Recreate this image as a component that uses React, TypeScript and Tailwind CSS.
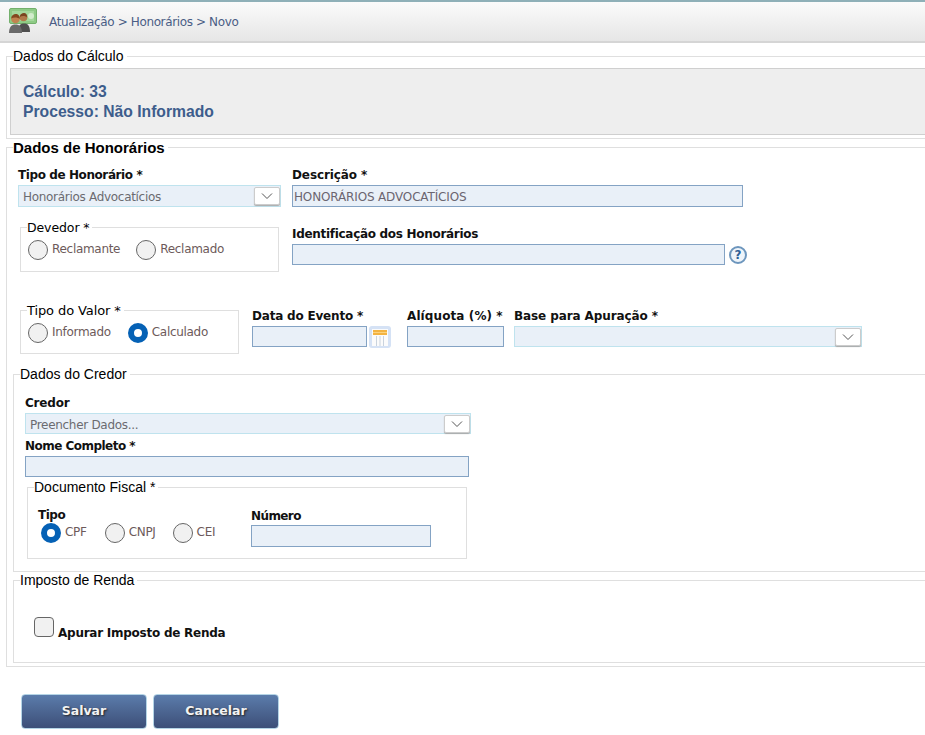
import type { ReactNode } from "react";

const labelCls = "block h-[17px] text-[12px] leading-[15px] font-bold text-[#111] whitespace-nowrap";
const arialLegend = "[font-family:'Liberation_Sans',sans-serif] text-[14px]";

function Chevron() {
  return (
    <svg width="14" height="8" viewBox="0 0 14 8" fill="none" stroke="#555" strokeWidth="1">
      <path d="M2 1.5 L7 6.5 L12 1.5" />
    </svg>
  );
}

function Select({ value, className }: { value?: string; className: string }) {
  return (
    <div className={`flex items-center justify-between border border-[#bfe3ee] bg-[#e9f0f8] pl-[4px] ${className}`}>
      <span className="pt-[2px] text-[12px] tracking-[-0.3px] text-[#6b6b70] whitespace-nowrap">{value}</span>
      <span className="flex h-[18px] w-[26px] items-center justify-center rounded-[2px] border border-[#ccc] bg-white shadow-[0_1px_1px_#aaa]">
        <Chevron />
      </span>
    </div>
  );
}

function Input({ value, className }: { value?: string; className: string }) {
  return (
    <div className={`flex items-center border border-[#84a3c4] bg-[#e9f0f8] pt-[1px] pl-[1px] text-[12px] tracking-[-0.15px] text-[#6b6570] whitespace-nowrap ${className}`}>
      {value}
    </div>
  );
}

function Radio({ label, checked, className }: { label: string; checked?: boolean; className?: string }) {
  return (
    <div className={`flex items-start ${className ?? ""}`}>
      {checked ? (
        <span className="h-[20px] w-[20px] rounded-full border-[6px] border-[#0561b5] bg-white" />
      ) : (
        <span className="h-[20px] w-[20px] rounded-full border-[1.5px] border-[#666] bg-[#f1f1f1]" />
      )}
      <span className="ml-[4px] pt-[1px] text-[12px] leading-[16px] tracking-[-0.3px] text-[#6d5a5a] whitespace-nowrap">{label}</span>
    </div>
  );
}

function Group({
  title,
  className,
  legendCls,
  children,
}: {
  title: string;
  className: string;
  legendCls: string;
  children: ReactNode;
}) {
  return (
    <fieldset className={`border border-[#dfdfdf] ${className}`}>
      <legend className={`ml-[6px] h-[15px] pr-[3px] leading-[15px] text-black whitespace-nowrap ${legendCls}`}>
        {title}
      </legend>
      {children}
    </fieldset>
  );
}

function MoneyPeopleIcon() {
  return (
    <svg width="28" height="25" viewBox="0 0 28 25">
      <rect x="0.5" y="0.5" width="27" height="15" rx="1.5" fill="#8ecb86" stroke="#74b06c" />
      <rect x="3" y="3" width="22" height="10" fill="#a5d89d" />
      <circle cx="22" cy="8" r="3" fill="#d2eccc" />
      <path d="M9 24 C9 18 11 15.5 15 15.5 C19 15.5 21 18 21 24 Z" fill="#4f4f4f" />
      <circle cx="14.5" cy="9.5" r="3.8" fill="#b07a4a" />
      <path d="M10.8 9 C11 6 13 5 15 5 C17 5 18.5 7 18.2 9.5 C17 8 13 7.5 10.8 9 Z" fill="#7a4420" />
      <path d="M0 25 C0 19 2.5 16.5 6.5 16.5 C10.5 16.5 13 19 13 25 Z" fill="#6a6a6a" />
      <circle cx="6.5" cy="11" r="4.3" fill="#c08450" />
      <path d="M2.2 10.5 C2.2 7.5 4.5 6 6.8 6 C9 6 11 7.8 10.8 11 C9 9.2 4.5 9 2.2 10.5 Z" fill="#84481f" />
    </svg>
  );
}

function CalendarIcon() {
  return (
    <div className="ml-[2px] flex h-[22px] w-[22px] items-center justify-center rounded-[3px] bg-[#d5e2f5]">
      <svg width="16" height="17" viewBox="0 0 16 17">
        <rect x="0" y="0" width="16" height="17" fill="#fbfbfb" />
        <rect x="1" y="1" width="14" height="5" fill="#f3b341" />
        <rect x="1" y="3" width="14" height="1" fill="#fbd27f" />
        <path d="M4.5 7v10M8 7v10M11.5 7v10" stroke="#c9d3de" />
      </svg>
    </div>
  );
}

function ActionButton({ label }: { label: string }) {
  return (
    <button className="h-[35px] w-[126px] rounded-[4px] border border-[#b5d5e6] bg-gradient-to-b from-[#5b7cab] to-[#3d4f78] text-[12.5px] font-bold text-[#f2f2f2] [text-shadow:1px_1px_2px_#222]">
      {label}
    </button>
  );
}

export default function App() {
  return (
    <div className="h-[735px] w-[925px] overflow-hidden bg-white" style={{ fontFamily: "'DejaVu Sans', sans-serif" }}>
      {/* Header */}
      <div className="flex h-[43px] items-center border-t-2 border-b-2 border-t-[#8fb0b8] border-b-[#d5d5d5] bg-gradient-to-b from-[#fbfbfb] to-[#e6e6e6]">
        <div className="ml-[9px] mb-[2px]">
          <MoneyPeopleIcon />
        </div>
        <span className="ml-[12px] text-[12px] tracking-[-0.37px] text-[#4a5d85]">Atualização &gt; Honorários &gt; Novo</span>
      </div>

      {/* Dados do Cálculo */}
      <div style={{ fontFamily: "'Liberation Sans', sans-serif" }}>
        <Group title="Dados do Cálculo" className="mt-[6px] ml-[6px] w-[960px] pb-[3px]" legendCls={arialLegend}>
          <div className="mt-[4px] ml-[3px] flex h-[67px] flex-col justify-center border border-[#cfcfcf] bg-[#eeeeee] pl-[12px] text-[15.7px] leading-[20px] font-bold text-[#3d5d8c]">
            <div>Cálculo: 33</div>
            <div>Processo: Não Informado</div>
          </div>
        </Group>
      </div>

      {/* Dados de Honorários */}
      <Group
        title="Dados de Honorários"
        className="mt-[1px] ml-[6px] w-[960px] pb-[3px]"
        legendCls="font-bold [font-family:'Liberation_Sans',sans-serif] text-[15px]"
      >
        <div className="mt-[13px] ml-[11px] flex">
          <div className="w-[263px]">
            <label className={`${labelCls} tracking-[-0.41px]`}>Tipo de Honorário *</label>
            <Select value="Honorários Advocatícios" className="h-[22px] w-[263px]" />
          </div>
          <div className="ml-[11px]">
            <label className={`${labelCls} tracking-[-0.1px]`}>Descrição *</label>
            <Input value="HONORÁRIOS ADVOCATÍCIOS" className="h-[22px] w-[451px]" />
          </div>
        </div>

        <div className="mt-[13px] ml-[13px] flex items-start">
          <Group title="Devedor *" className="h-[52px] w-[259px]" legendCls="text-[12.5px] tracking-[-0.1px]">
            <div className="mt-[5px] ml-[7px] flex">
              <Radio label="Reclamante" />
              <Radio label="Reclamado" className="ml-[16px]" />
            </div>
          </Group>
          <div className="ml-[13px] mt-[7px]">
            <label className={`${labelCls} tracking-[-0.3px]`}>Identificação dos Honorários</label>
            <div className="flex items-center">
              <Input className="h-[21px] w-[433px]" />
              <span className="ml-[4px] flex h-[18px] w-[18px] items-center justify-center rounded-full border-2 border-[#6d96bd] bg-[#eef4fa] text-[12px] leading-none font-bold text-[#2f5f95]">
                ?
              </span>
            </div>
          </div>
        </div>

        <div className="mt-[31px] ml-[13px] flex items-start">
          <Group title="Tipo do Valor *" className="h-[51px] w-[219px]" legendCls="text-[13px] tracking-[-0.1px]">
            <div className="mt-[5px] ml-[7px] flex">
              <Radio label="Informado" />
              <Radio label="Calculado" checked className="ml-[17px]" />
            </div>
          </Group>
          <div className="ml-[13px] mt-[6px]">
            <label className={`${labelCls} tracking-[-0.2px]`}>Data do Evento *</label>
            <div className="flex">
              <Input className="h-[21px] w-[115px]" />
              <CalendarIcon />
            </div>
          </div>
          <div className="ml-[16px] mt-[6px]">
            <label className={`${labelCls} tracking-[0.1px]`}>Alíquota (%) *</label>
            <Input className="h-[21px] w-[97px]" />
          </div>
          <div className="ml-[10px] mt-[6px]">
            <label className={`${labelCls} tracking-[-0.1px]`}>Base para Apuração *</label>
            <Select className="h-[21px] w-[348px]" />
          </div>
        </div>

        {/* Dados do Credor */}
        <Group title="Dados do Credor" className="mt-[13px] ml-[6px] w-[950px]" legendCls={arialLegend}>
          <div className="ml-[11px] mt-[14px]">
            <label className={`${labelCls} tracking-[-0.2px]`}>Credor</label>
            <Select value="Preencher Dados..." className="h-[21px] w-[446px]" />
            <label className={`${labelCls} mt-[5px] tracking-[-0.53px]`}>Nome Completo *</label>
            <Input className="h-[21px] w-[444px]" />
          </div>
          <Group title="Documento Fiscal *" className="mt-[3px] ml-[13px] h-[79px] w-[440px]" legendCls={arialLegend}>
            <div className="mt-[13px] ml-[10px] flex items-start">
              <div className="w-[213px]">
                <label className={`${labelCls} tracking-[-0.5px]`}>Tipo</label>
                <div className="-mt-[2px] ml-[3px] flex">
                  <Radio label="CPF" checked />
                  <Radio label="CNPJ" className="ml-[18px]" />
                  <Radio label="CEI" className="ml-[17px]" />
                </div>
              </div>
              <div className="mt-[1px]">
                <label className={`${labelCls} tracking-[-0.6px]`}>Número</label>
                <Input className="-mt-[1px] h-[22px] w-[180px]" />
              </div>
            </div>
          </Group>
          <div className="h-[12px]" />
        </Group>

        {/* Imposto de Renda */}
        <Group title="Imposto de Renda" className="mt-[1px] ml-[6px] w-[950px]" legendCls={arialLegend}>
          <div className="mt-[29px] ml-[20px] flex h-[45px] items-start">
            <span className="h-[20px] w-[20px] rounded-[4px] border-[1.5px] border-[#666] bg-[#f1f1f1]" />
            <label className="mt-[9px] ml-[4px] text-[12px] leading-[15px] font-bold tracking-[-0.25px] text-[#111]">
              Apurar Imposto de Renda
            </label>
          </div>
        </Group>
      </Group>

      <div className="mt-[27px] ml-[21px] flex gap-[6px]">
        <ActionButton label="Salvar" />
        <ActionButton label="Cancelar" />
      </div>
    </div>
  );
}
